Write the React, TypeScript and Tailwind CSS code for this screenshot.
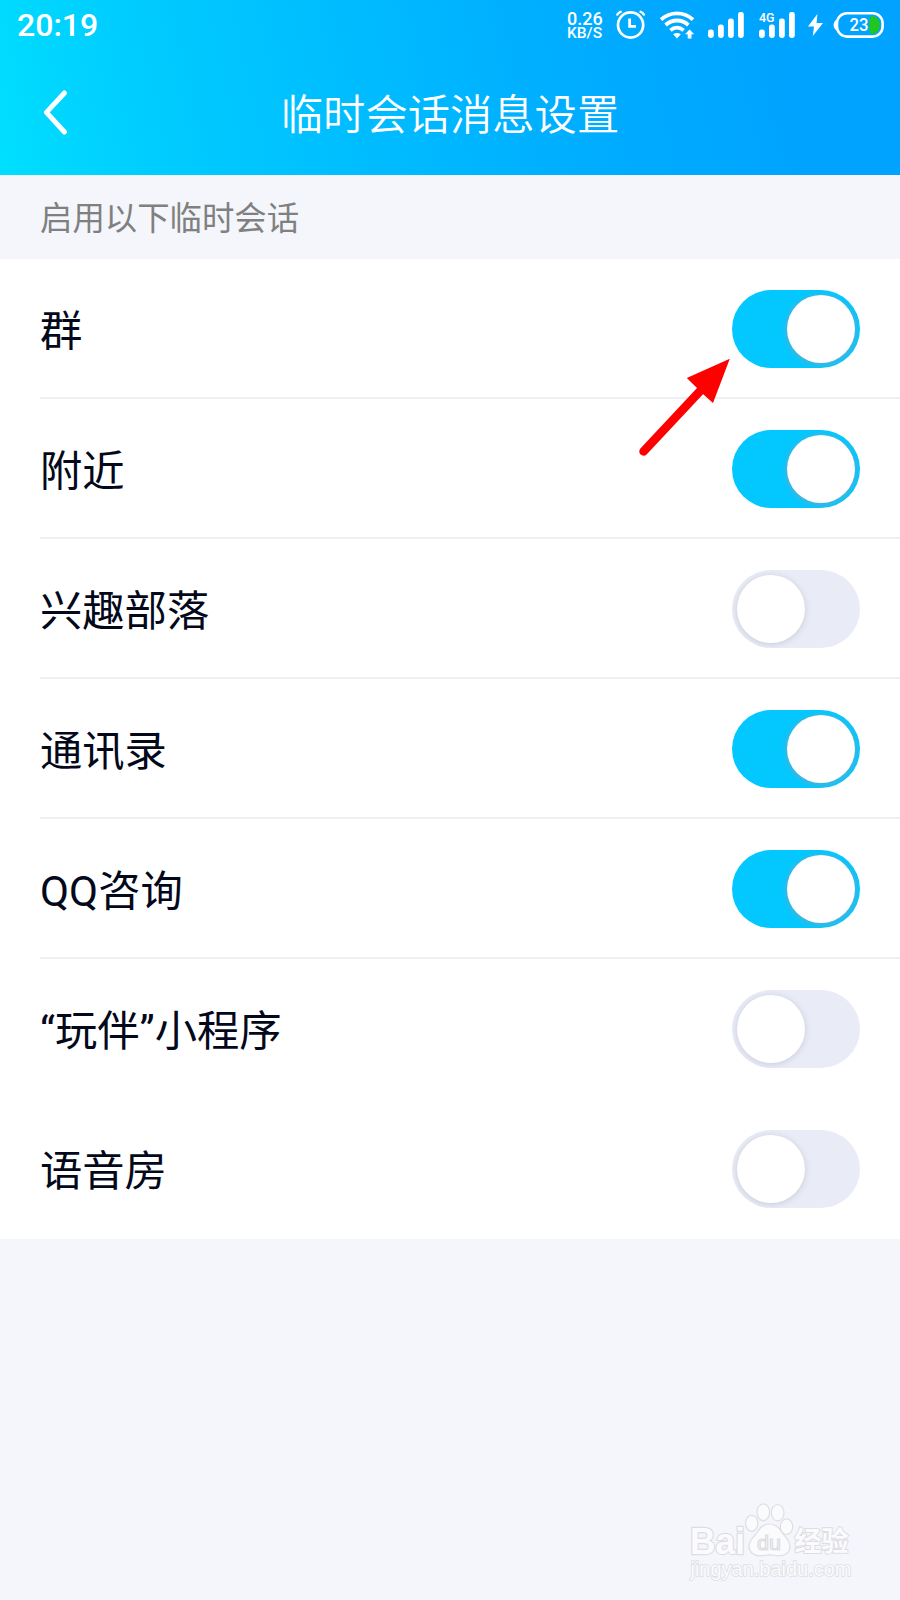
import { useState } from "react";

const SESSIONS = [
  { id: "group", label: "群", enabled: true, divider: true },
  { id: "nearby", label: "附近", enabled: true, divider: true },
  { id: "tribe", label: "兴趣部落", enabled: false, divider: true },
  { id: "contacts", label: "通讯录", enabled: true, divider: true },
  { id: "consult", label: "QQ咨询", enabled: true, divider: true },
  { id: "playmate", label: "“玩伴”小程序", enabled: false, divider: false },
  { id: "voice", label: "语音房", enabled: false, divider: false },
];

function Signal({ label }: { label?: string }) {
  return (
    <svg className="overflow-visible" width="37" height="28" viewBox="0 0 37 28" fill="white">
      <rect x="0" y="18.5" width="5.8" height="8.5" rx="2.4" />
      <rect x="10" y="13.5" width="5.8" height="13.5" rx="2.4" />
      <rect x="20" y="7.5" width="5.8" height="19.5" rx="2.4" />
      <rect x="30" y="1" width="5.8" height="26" rx="2.4" />
      {label && (
        <text x="0" y="10.5" fontSize="13.5" fontWeight="500" textLength="15.5" lengthAdjust="spacingAndGlyphs">
          {label}
        </text>
      )}
    </svg>
  );
}

function StatusBar() {
  return (
    <div className="flex h-[50px] items-center pl-[17px] text-white">
      <span className="text-[32px] leading-none font-medium">20:19</span>

      <div className="ml-auto flex h-[50px] w-[333px] items-center">
        <div className="flex w-[36px] flex-col pt-px font-medium">
          <span className="text-[18px] leading-[15px]">0.26</span>
          <span className="text-[15.5px] leading-[14px]">KB/S</span>
        </div>

        {/* Alarm */}
        <svg className="ml-[13px]" width="30" height="30" viewBox="0 0 30 30" fill="none" stroke="white" strokeWidth="2.7">
          <circle cx="14.6" cy="15" r="12.6" />
          <path d="M13.6 8.5V16.4H20" strokeWidth="2.8" />
          <path d="M1.4 4.6Q2.4 2.4 4.6 1.8M27.8 4.6Q26.8 2.4 24.6 1.8" strokeWidth="2.4" strokeLinecap="round" />
        </svg>

        {/* Wifi */}
        <svg className="ml-[14px]" width="36" height="28" viewBox="0 0 36 28" fill="none" stroke="white" strokeWidth="3.8">
          <path d="M1 8.6C10 0.2 24 0.2 33 8.6" />
          <path d="M5.6 14C12.2 8 21.8 8 28.4 14" />
          <path d="M10.4 19.4C14.4 15.8 19.6 15.8 23.6 19.4" />
          <path d="M13.2 23.2Q17 20.8 20.8 23.2L17 27.4Z" fill="white" stroke="none" />
          <path d="M29.6 18.4L34.2 23.2H31.5V27.4H27.7V23.2H25Z" fill="white" stroke="none" />
        </svg>

        <div className="ml-[12px]">
          <Signal />
        </div>
        <div className="ml-[14px]">
          <Signal label="4G" />
        </div>

        <svg className="ml-[12px]" width="15" height="22" viewBox="0 0 15 22" fill="white">
          <path d="M9.4 0L0 12.4H6L4.8 22L15 9H8.6Z" />
        </svg>

        {/* Battery */}
        <svg className="ml-[10px]" width="52" height="28" viewBox="0 0 52 28">
          <path d="M3.8 8.5Q0.6 10.5 0.6 14T3.8 19.5Z" fill="white" />
          <rect x="4" y="2.2" width="45.6" height="23.4" rx="10" fill="none" stroke="white" strokeWidth="2.6" />
          <path d="M38.5 5H40Q46.8 6.5 46.8 14T40 23H38.5Q36 21 36 14T38.5 5Z" fill="#1fc71f" />
          <text x="16.5" y="20.2" fontSize="18.5" fontWeight="500" fill="white" textLength="19" lengthAdjust="spacingAndGlyphs">
            23
          </text>
        </svg>
      </div>
    </div>
  );
}

function Header() {
  return (
    <header className="h-[175px] bg-[linear-gradient(77deg,#00dfff_0%,#00ceff_15%,#00bfff_36%,#00adff_63%,#00a3ff_88%,#00a3ff_100%)]">
      <StatusBar />
      <div className="grid h-[125px] grid-cols-[100px_1fr_100px] items-center">
        <button className="pl-[43px]" aria-label="Back">
          <svg width="26" height="46" viewBox="0 0 26 46" fill="none" stroke="white" strokeWidth="5" strokeLinecap="round" strokeLinejoin="round">
            <path d="M21.4 3L3.4 22.4L21.4 42" />
          </svg>
        </button>
        <h1 className="pt-2 text-center text-[42.3px] leading-none font-[350] whitespace-nowrap text-white">临时会话消息设置</h1>
      </div>
    </header>
  );
}

function Toggle({ on, onClick }: { on: boolean; onClick: () => void }) {
  return (
    <button
      role="switch"
      aria-checked={on}
      onClick={onClick}
      className={`mt-px flex h-[78px] w-[128px] items-center overflow-hidden rounded-full px-[5px] ${
        on ? "justify-end bg-[#03c8ff]" : "justify-start bg-[#e9ecf6]"
      }`}
    >
      <span
        className={`size-[68px] rounded-full bg-white ${
          on ? "shadow-[0_1px_5px_1px_rgba(145,155,175,0.6)]" : "shadow-[0_1px_6px_rgba(100,105,140,0.25)]"
        }`}
      />
    </button>
  );
}

function Watermark() {
  return (
    <svg width="180" height="86" viewBox="0 0 180 86" fill="#fbfbfd" stroke="#dddee3" strokeWidth="1.2">
      <g fontFamily="Liberation Sans, sans-serif" paintOrder="stroke">
        <text x="9" y="50.5" fontSize="36" fontWeight="700" strokeWidth="2.4" textLength="55" lengthAdjust="spacingAndGlyphs">
          Bai
        </text>
        <text x="9.5" y="72.5" fontSize="19.5" strokeWidth="1.6" textLength="161" lengthAdjust="spacingAndGlyphs">
          jingyan.baidu.com
        </text>
      </g>
      {/* Paw */}
      <ellipse cx="70.7" cy="20.3" rx="6.2" ry="8" />
      <ellipse cx="82.3" cy="9.2" rx="6.3" ry="8.4" />
      <ellipse cx="96.7" cy="9.7" rx="6.3" ry="8.2" />
      <ellipse cx="105.5" cy="23.7" rx="6.2" ry="7.8" />
      <path d="M88.5 21C94 21 97.5 24 100 28C103 33 109 36.5 109 43.5C109 49.5 104 52.8 98 52.8C94 52.8 92 51.8 88.5 51.8S83 52.8 79 52.8C73 52.8 68 49 68 43.5C68 36.5 74 33 77 28C79.5 24 83 21 88.5 21Z" />
      <text x="76" y="47" fontSize="20" fontFamily="Liberation Sans, sans-serif" textLength="24" lengthAdjust="spacingAndGlyphs">
        du
      </text>
      <text
        x="113.5"
        y="48"
        fontSize="27"
        fontWeight="700"
        fontFamily="Noto Sans CJK SC, sans-serif"
        strokeWidth="2"
        paintOrder="stroke"
      >
        经验
      </text>
    </svg>
  );
}

export default function App() {
  const [sessions, setSessions] = useState(SESSIONS);

  const toggle = (id: string) =>
    setSessions((prev) => prev.map((s) => (s.id === id ? { ...s, enabled: !s.enabled } : s)));

  return (
    <div className="relative flex h-[1600px] w-[900px] flex-col overflow-hidden bg-[#f4f6fb] font-[Roboto,'Noto_Sans_CJK_SC',sans-serif]">
      <Header />

      <div className="flex h-[84px] items-center pt-[5px] pl-[40px] text-[32.4px] leading-none text-[#808080]">
        <span>启用以下临时会话</span>
      </div>

      <ul className="bg-white pl-[40px]">
        {sessions.map((s) => (
          <li
            key={s.id}
            className={`flex h-[140px] items-center justify-between border-b-2 pr-[40px] ${
              s.divider ? "border-[#eeeff1]" : "border-transparent"
            }`}
          >
            <span className="pt-2 text-[42.3px] leading-none text-[#03081a]">{s.label}</span>
            <Toggle on={s.enabled} onClick={() => toggle(s.id)} />
          </li>
        ))}
      </ul>

      <div className="mt-auto mr-[39px] mb-[11px] self-end">
        <Watermark />
      </div>

      {/* Pointer over the first switch */}
      <svg className="absolute top-[350px] left-[630px]" width="110" height="112" viewBox="0 0 110 112">
        <path d="M13.5 101.5L72 39" stroke="#ff0000" strokeWidth="8.5" strokeLinecap="round" />
        <path d="M99.8 8.8L56.8 28L66.5 37.5L73.5 44.5L83 53Z" fill="#ff0000" />
      </svg>
    </div>
  );
}
